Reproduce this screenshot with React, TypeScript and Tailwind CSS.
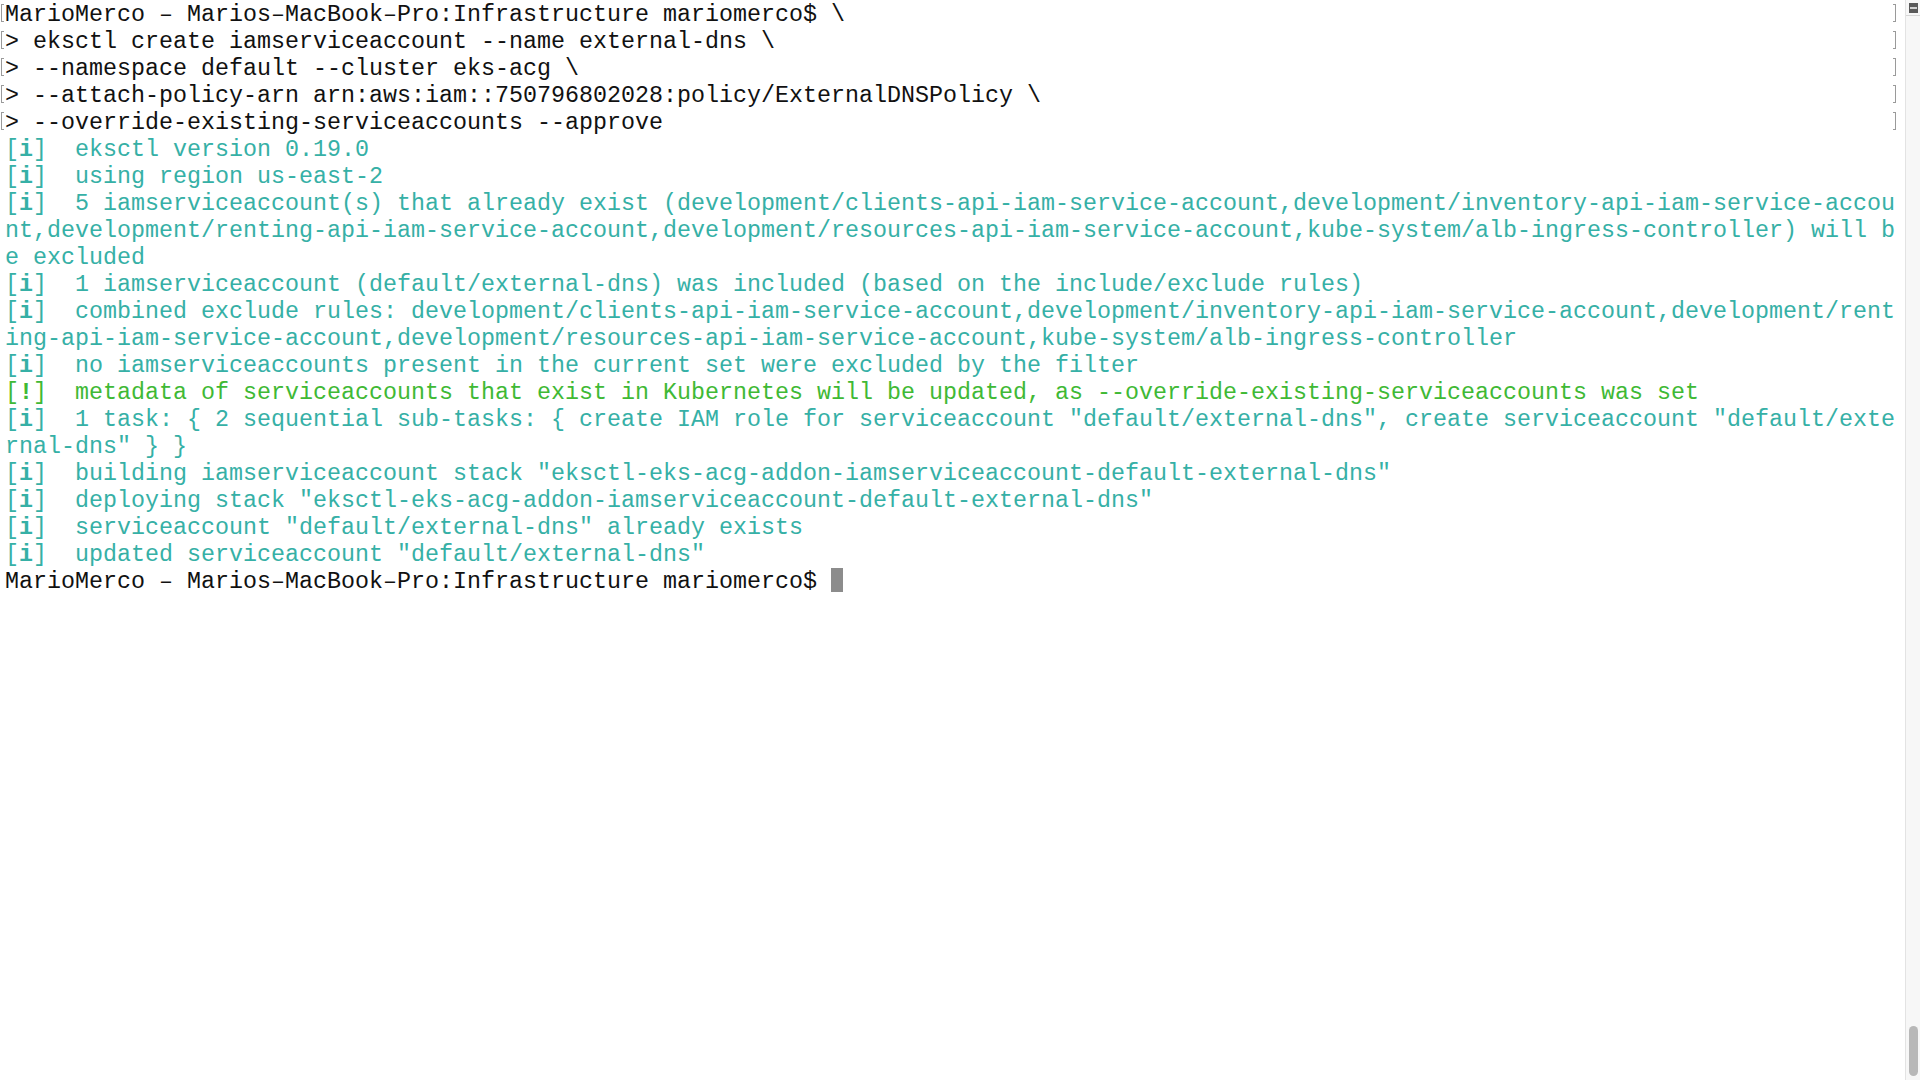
import React from "react";

type Line = { text: string; color: "black" | "teal" | "green"; prefix?: "i" | "!"; marked?: boolean; cursor?: boolean };

const lines: Line[] = [
  { text: "MarioMerco – Marios–MacBook–Pro:Infrastructure mariomerco$ \\", color: "black", marked: true },
  { text: "> eksctl create iamserviceaccount --name external-dns \\", color: "black", marked: true },
  { text: "> --namespace default --cluster eks-acg \\", color: "black", marked: true },
  { text: "> --attach-policy-arn arn:aws:iam::750796802028:policy/ExternalDNSPolicy \\", color: "black", marked: true },
  { text: "> --override-existing-serviceaccounts --approve", color: "black", marked: true },
  { text: "  eksctl version 0.19.0", color: "teal", prefix: "i" },
  { text: "  using region us-east-2", color: "teal", prefix: "i" },
  { text: "  5 iamserviceaccount(s) that already exist (development/clients-api-iam-service-account,development/inventory-api-iam-service-accou", color: "teal", prefix: "i" },
  { text: "nt,development/renting-api-iam-service-account,development/resources-api-iam-service-account,kube-system/alb-ingress-controller) will b", color: "teal" },
  { text: "e excluded", color: "teal" },
  { text: "  1 iamserviceaccount (default/external-dns) was included (based on the include/exclude rules)", color: "teal", prefix: "i" },
  { text: "  combined exclude rules: development/clients-api-iam-service-account,development/inventory-api-iam-service-account,development/rent", color: "teal", prefix: "i" },
  { text: "ing-api-iam-service-account,development/resources-api-iam-service-account,kube-system/alb-ingress-controller", color: "teal" },
  { text: "  no iamserviceaccounts present in the current set were excluded by the filter", color: "teal", prefix: "i" },
  { text: "  metadata of serviceaccounts that exist in Kubernetes will be updated, as --override-existing-serviceaccounts was set", color: "green", prefix: "!" },
  { text: "  1 task: { 2 sequential sub-tasks: { create IAM role for serviceaccount \"default/external-dns\", create serviceaccount \"default/exte", color: "teal", prefix: "i" },
  { text: "rnal-dns\" } }", color: "teal" },
  { text: "  building iamserviceaccount stack \"eksctl-eks-acg-addon-iamserviceaccount-default-external-dns\"", color: "teal", prefix: "i" },
  { text: "  deploying stack \"eksctl-eks-acg-addon-iamserviceaccount-default-external-dns\"", color: "teal", prefix: "i" },
  { text: "  serviceaccount \"default/external-dns\" already exists", color: "teal", prefix: "i" },
  { text: "  updated serviceaccount \"default/external-dns\"", color: "teal", prefix: "i" },
  { text: "MarioMerco – Marios–MacBook–Pro:Infrastructure mariomerco$ ", color: "black", cursor: true },
];

const colorClass: Record<Line["color"], string> = {
  black: "text-[#111111]",
  teal: "text-[#36b0a6]",
  green: "text-[#3fb935]",
};

function Row({ line }: { line: Line }) {
  return (
    <div className={`relative h-[27px] leading-[27px] pl-[5px] whitespace-pre ${colorClass[line.color]}`}>
      {line.marked && (
        <>
          <span className="absolute left-[1px] top-[2px] h-[18px] w-[3px] border-l border-t border-b border-[#9a9a9a]" />
          <span className="absolute left-[1893px] top-[2px] h-[18px] w-[3px] border-r border-t border-b border-[#9a9a9a]" />
        </>
      )}
      {line.prefix && (
        <span>
          [<span className="inline-block w-[14px] text-center font-bold">{line.prefix}</span>]
        </span>
      )}
      {line.text}
      {line.cursor && <span className="inline-block w-[12px] h-[24px] align-middle bg-[#8c8c8c] -mt-[3px]" />}
    </div>
  );
}

export default function App() {
  return (
    <div className="w-[1920px] h-[1080px] bg-white flex overflow-hidden">
      <div
        className="flex-1 text-[23.33px] pt-[2px]"
        style={{ fontFamily: '"Liberation Mono", "DejaVu Sans Mono", monospace' }}
      >
        {lines.map((l, i) => (
          <Row key={i} line={l} />
        ))}
      </div>
      <div className="w-[15px] h-full bg-[#f7f7f7] border-l border-[#e3e3e3] flex flex-col justify-between">
        <div className="h-[16px] border-b border-[#d6d6d6] flex items-center justify-center">
          <div className="w-[9px] h-[10px] bg-[#5a5a5a] flex flex-col justify-center px-[1px]">
            <div className="h-[2px] bg-[#d0d0d0]" />
          </div>
        </div>
        <div className="flex justify-center pb-[4px]">
          <div className="w-[9px] h-[50px] rounded-full bg-[#b8b8b8]" />
        </div>
      </div>
    </div>
  );
}
